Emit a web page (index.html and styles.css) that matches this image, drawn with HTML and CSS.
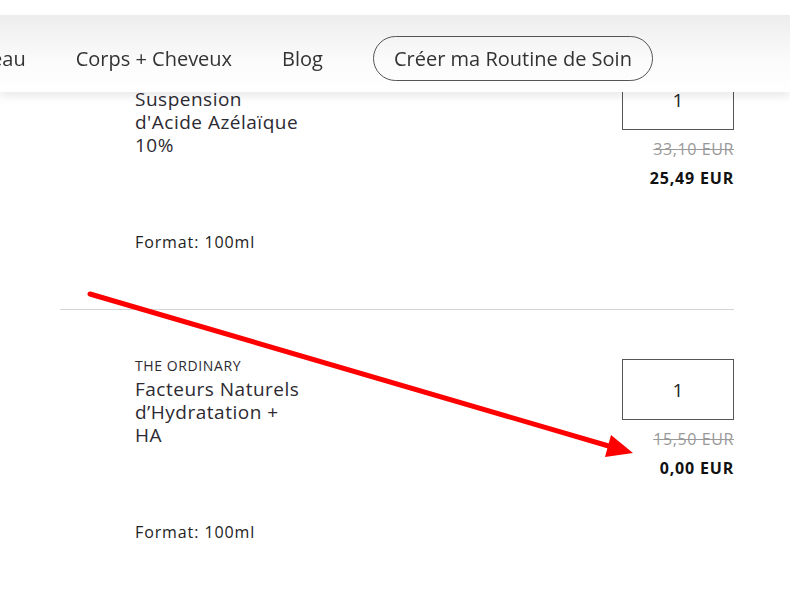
FILE: index.html
```html
<!DOCTYPE html>
<html lang="fr">
<head>
<meta charset="utf-8">
<title>Panier</title>
<link rel="stylesheet" href="styles.css">
</head>
<body>
<header class="site-header">
  <nav class="nav">
    <a class="nav-link nav-first" href="#">Peau</a>
    <a class="nav-link" href="#">Corps + Cheveux</a>
    <a class="nav-link" href="#">Blog</a>
    <a class="nav-button" href="#">Créer ma Routine de Soin</a>
  </nav>
</header>

<main class="cart">
  <div class="item">
    <div class="item-thumb"></div>
    <div class="item-info">
      <div class="brand">THE ORDINARY</div>
      <div class="name">Suspension<br>d'Acide Azélaïque<br>10%</div>
      <div class="format">Format: 100ml</div>
    </div>
    <div class="item-side">
      <div class="qty">1</div>
      <div class="price-old">33,10 EUR</div>
      <div class="price-new">25,49 EUR</div>
    </div>
  </div>
  <div class="item item-sep">
    <div class="item-thumb"></div>
    <div class="item-info">
      <div class="brand">THE ORDINARY</div>
      <div class="name">Facteurs Naturels<br>d’Hydratation +<br>HA</div>
      <div class="format">Format: 100ml</div>
    </div>
    <div class="item-side">
      <div class="qty">1</div>
      <div class="price-old">15,50 EUR</div>
      <div class="price-new">0,00 EUR</div>
    </div>
  </div>
</main>

<svg class="annotation" width="790" height="598" viewBox="0 0 790 598" aria-hidden="true">
  <line x1="90" y1="294" x2="612" y2="447" stroke="#ff0000" stroke-width="5" stroke-linecap="round"/>
  <polygon points="611,435 605,457 633,453" fill="#ff0000"/>
</svg>
</body>
</html>
```

FILE: styles.css
```css
html, body {
  margin: 0;
  padding: 0;
  background: #fff;
  overflow: hidden;
}
body {
  font-family: "Open Sans", "Liberation Sans", sans-serif;
  color: #2d2a32;
  width: 790px;
  height: 598px;
  position: relative;
}

.site-header {
  position: fixed;
  top: 15px;
  left: 0;
  right: 0;
  height: 77px;
  background: linear-gradient(#ededed, #fbfbfb 60%, #fff);
  box-shadow: 0 5px 8px rgba(0, 0, 0, 0.08);
  z-index: 5;
  box-sizing: border-box;
  padding-top: 21px;
}
.nav {
  display: flex;
  align-items: center;
  gap: 50px;
  height: 45px;
}
.nav-link {
  color: #333;
  text-decoration: none;
  font-size: 20px;
  letter-spacing: 0;
  white-space: nowrap;
}
.nav-first {
  margin-left: -21px;
}
.nav-button {
  color: #333;
  text-decoration: none;
  font-size: 20px;
  letter-spacing: 0;
  white-space: nowrap;
  height: 45px;
  box-sizing: border-box;
  width: 280px;
  flex: none;
  border: 1.5px solid #555;
  border-radius: 23px;
  display: flex;
  align-items: center;
  justify-content: center;
}

.cart {
  padding-top: 20px;
  margin-left: 60px;
  width: 674px;
}
.item {
  display: flex;
  padding: 48px 0 57px;
}
.item-sep {
  border-top: 1px solid #d4d4d4;
}
.item-thumb {
  width: 75px;
  flex: none;
}
.item-info {
  flex: 1;
}
.brand {
  font-size: 14px;
  line-height: 16px;
  color: #2d2a32;
  letter-spacing: 0.6px;
}
.name {
  margin-top: 4px;
  font-size: 19px;
  line-height: 23px;
  letter-spacing: 0.5px;
  color: #2d2a32;
}
.format {
  margin-top: 75px;
  font-size: 16px;
  line-height: 20px;
  letter-spacing: 0.9px;
  color: #222;
}
.item-side {
  width: 112px;
  flex: none;
  margin-top: 1px;
  display: flex;
  flex-direction: column;
  align-items: flex-end;
}
.qty {
  width: 112px;
  height: 61px;
  box-sizing: border-box;
  border: 1px solid #555;
  display: flex;
  align-items: center;
  justify-content: center;
  font-size: 19px;
  color: #222;
}
.price-old {
  margin-top: 9px;
  font-size: 16px;
  line-height: 20px;
  letter-spacing: 0.6px;
  color: #999;
  text-decoration: line-through;
}
.price-new {
  margin-top: 9px;
  font-size: 16px;
  line-height: 20px;
  letter-spacing: 0.8px;
  font-weight: 700;
  color: #111;
}

.annotation {
  position: absolute;
  top: 0;
  left: 0;
  pointer-events: none;
  z-index: 10;
}
```
